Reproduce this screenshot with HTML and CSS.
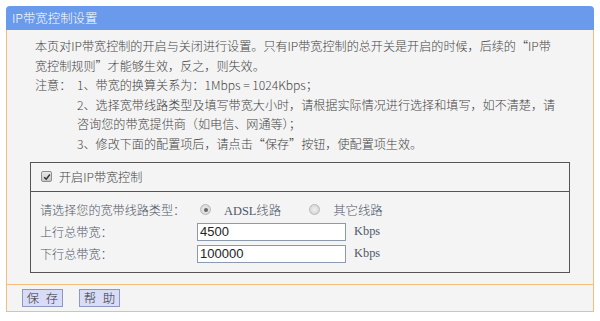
FILE: index.html
```html
<!DOCTYPE html>
<html lang="zh-CN">
<head>
<meta charset="utf-8">
<title>IP带宽控制设置</title>
<link rel="stylesheet" href="styles.css">
</head>
<body>
<div class="panel">
  <div class="header">IP带宽控制设置</div>
  <div class="content">
    <div class="desc">
      <p class="intro">本页对IP带宽控制的开启与关闭进行设置。只有IP带宽控制的总开关是开启的时候，后续的“IP带<br>宽控制规则”才能够生效，反之，则失效。</p>
      <div class="note">
        <span class="note-label">注意：</span>
        <ol class="note-list">
          <li>1、带宽的换算关系为：1Mbps = 1024Kbps；</li>
          <li>2、选择宽带线路类型及填写带宽大小时，请根据实际情况进行选择和填写，如不清楚，请<br>咨询您的带宽提供商（如电信、网通等）；</li>
          <li>3、修改下面的配置项后，请点击“保存”按钮，使配置项生效。</li>
        </ol>
      </div>
    </div>
    <div class="box">
      <label class="box-head"><span class="checkbox"><svg viewBox="0 0 10 10" width="8" height="8"><path d="M1.5 5.2 L4 7.8 L8.6 1.8" fill="none" stroke="#333" stroke-width="1.8"/></svg></span>开启IP带宽控制</label>
      <div class="box-body">
        <span class="label">请选择您的宽带线路类型：</span>
        <div class="radios">
          <span class="radio checked"></span><span class="radio-text">ADSL线路</span>
          <span class="radio"></span><span class="radio-text">其它线路</span>
        </div>
        <span class="label">上行总带宽：</span>
        <div class="field"><span class="input">4500</span><span class="unit">Kbps</span></div>
        <span class="label">下行总带宽：</span>
        <div class="field"><span class="input">100000</span><span class="unit">Kbps</span></div>
      </div>
    </div>
  </div>
  <div class="footer">
    <span class="btn">保 存</span>
    <span class="btn">帮 助</span>
  </div>
</div>
</body>
</html>
```
FILE: styles.css
```css
html, body {
  margin: 0;
  padding: 0;
  background: #ffffff;
}
body {
  padding: 6px;
  font-family: "Noto Sans CJK SC", sans-serif;
  font-weight: 300;
  font-size: 12.1px;
  color: #444444;
}
.panel {
  width: 588px;
}
.header {
  height: 24px;
  line-height: 24px;
  background: #6a9aeb;
  color: #ffffff;
  padding-left: 6px;
  font-size: 12.4px;
  border-radius: 4px 4px 0 0;
}
.content {
  background: #f4f4f4;
  border-left: 1px solid #f3bd7d;
  border-right: 1px solid #f3bd7d;
  padding: 6px 0 11px 0;
}
.desc {
  padding-left: 28px;
  line-height: 19.6px;
}
.intro {
  margin: 0;
}
.note {
  display: flex;
}
.note-label {
  width: 42px;
  flex: none;
}
.note-list {
  list-style: none;
  margin: 0;
  padding: 0;
}
.box {
  margin: 8px 0 0 23px;
  width: 538px;
  border: 1px solid #555555;
}
.box-head {
  display: flex;
  align-items: center;
  height: 28px;
  padding-left: 10px;
  border-bottom: 1px solid #555555;
  color: #444444;
}
.checkbox {
  width: 9px;
  height: 9px;
  border: 1px solid #8e8e8e;
  background: linear-gradient(#e8e8e8, #c8c8c8);
  border-radius: 2px;
  margin-right: 7px;
  display: flex;
  align-items: center;
  justify-content: center;
}
.box-body {
  display: grid;
  grid-template-columns: 157px 1fr;
  grid-auto-rows: 22px;
  align-items: center;
  padding: 7px 0 7px 9px;
  color: #4f5869;
}
.radios {
  display: flex;
  align-items: center;
}
.radio {
  width: 9px;
  height: 9px;
  border-radius: 50%;
  border: 1px solid #b8b8b8;
  background: radial-gradient(circle, #f0f0f0, #cfcfcf);
  margin: 0 13px 0 3px;
  position: relative;
}
.radio.checked::after {
  content: "";
  position: absolute;
  left: 2.5px;
  top: 2.5px;
  width: 4px;
  height: 4px;
  border-radius: 50%;
  background: #666666;
}
.radio-text {
  margin-right: 25px;
  font-family: "Liberation Serif", "Noto Sans CJK SC", serif;
  font-size: 12.4px;
}
.radio-text:last-child {
  margin-right: 0;
}
.field {
  display: flex;
  align-items: center;
}
.input {
  box-sizing: border-box;
  width: 149px;
  height: 18px;
  line-height: 16px;
  border: 1px solid #8c9ab0;
  background: #ffffff;
  padding-left: 2px;
  font-family: "Liberation Sans", sans-serif;
  font-weight: 400;
  font-size: 13px;
  color: #222222;
}
.unit {
  margin-left: 8px;
  font-family: "Liberation Serif", serif;
  font-weight: 400;
  font-size: 12.4px;
}
.footer {
  display: flex;
  gap: 16px;
  align-items: center;
  height: 26px;
  padding-left: 15px;
  background: #f4f4f4;
  border: 1px solid #f3bd7d;
}
.btn {
  box-sizing: border-box;
  width: 41px;
  height: 18px;
  line-height: 16px;
  text-align: center;
  background: #d8dcf7;
  border: 1px solid #8f98c4;
  color: #333333;
  font-size: 12.4px;
  letter-spacing: 2px;
  text-indent: 2px;
}
```
